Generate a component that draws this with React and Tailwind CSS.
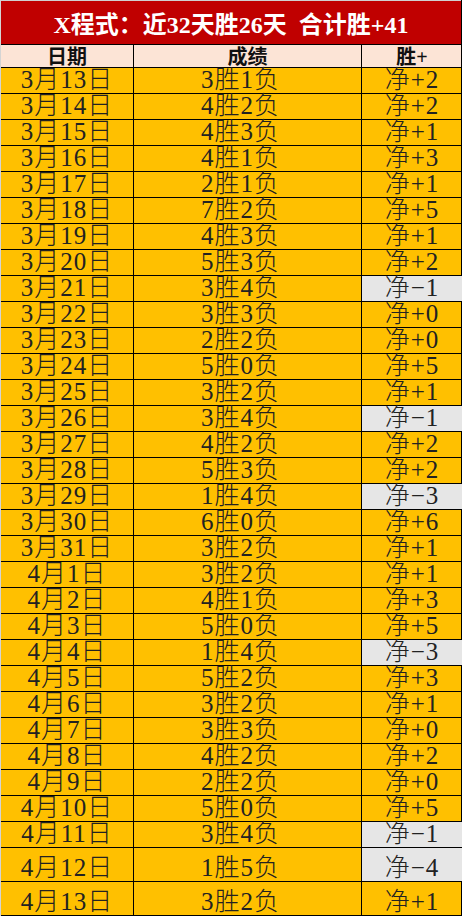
import React from 'react'

var rows = [
  ['3月13日', '3胜1负', '净+2'],
  ['3月14日', '4胜2负', '净+2'],
  ['3月15日', '4胜3负', '净+1'],
  ['3月16日', '4胜1负', '净+3'],
  ['3月17日', '2胜1负', '净+1'],
  ['3月18日', '7胜2负', '净+5'],
  ['3月19日', '4胜3负', '净+1'],
  ['3月20日', '5胜3负', '净+2'],
  ['3月21日', '3胜4负', '净−1'],
  ['3月22日', '3胜3负', '净+0'],
  ['3月23日', '2胜2负', '净+0'],
  ['3月24日', '5胜0负', '净+5'],
  ['3月25日', '3胜2负', '净+1'],
  ['3月26日', '3胜4负', '净−1'],
  ['3月27日', '4胜2负', '净+2'],
  ['3月28日', '5胜3负', '净+2'],
  ['3月29日', '1胜4负', '净−3'],
  ['3月30日', '6胜0负', '净+6'],
  ['3月31日', '3胜2负', '净+1'],
  ['4月1日', '3胜2负', '净+1'],
  ['4月2日', '4胜1负', '净+3'],
  ['4月3日', '5胜0负', '净+5'],
  ['4月4日', '1胜4负', '净−3'],
  ['4月5日', '5胜2负', '净+3'],
  ['4月6日', '3胜2负', '净+1'],
  ['4月7日', '3胜3负', '净+0'],
  ['4月8日', '4胜2负', '净+2'],
  ['4月9日', '2胜2负', '净+0'],
  ['4月10日', '5胜0负', '净+5'],
  ['4月11日', '3胜4负', '净−1'],
  ['4月12日', '1胜5负', '净−4'],
  ['4月13日', '3胜2负', '净+1'],
]

var font = { fontFamily: '"Liberation Serif", "Noto Sans CJK SC", serif' }

function Row({ r, i }) {
  var tall = i >= 30
  var neg = r[2].indexOf('−') >= 0
  var h = tall ? 'h-[34px]' : 'h-[26px]'
  return (
    <div className={'flex border-b border-black bg-[#ffc000] text-[25px] font-light tracking-[1px] leading-none text-[#222] ' + h}>
      <div className="w-[133px] shrink-0 border-r border-black flex items-end justify-center pb-[1px]">{r[0]}</div>
      <div className="w-[228px] shrink-0 border-r border-black flex items-end justify-center pb-[1px] pr-[14px]">{r[1]}</div>
      <div className={'w-[100px] shrink-0 flex items-end justify-center pb-[1px] ' + (neg ? 'bg-[#e6e6e6]' : '')}>{r[2]}</div>
    </div>
  )
}

function App() {
  return (
    <div className="w-[462px] bg-white" style={font}>
      <div className="border-l border-[#d4d4d4] border-r border-r-black">
        <div className="h-[45px] border-t border-[#d0d0d0] border-b border-b-black bg-[#c00000] flex items-center justify-center text-white text-[24px] font-bold pt-[4px]">
          X程式：近32天胜26天&nbsp;&nbsp;合计胜+41
        </div>
        <div className="flex h-[23px] border-b border-black bg-[#fce4d6] text-[20px] font-bold leading-none text-[#111]">
          <div className="w-[133px] shrink-0 border-r border-black flex items-end justify-center">日期</div>
          <div className="w-[228px] shrink-0 border-r border-black flex items-end justify-center">成绩</div>
          <div className="w-[100px] shrink-0 flex items-end justify-center">胜+</div>
        </div>
        {rows.map(function (r, i) {
          return <Row key={i} r={r} i={i} />
        })}
      </div>
    </div>
  )
}

export default App
